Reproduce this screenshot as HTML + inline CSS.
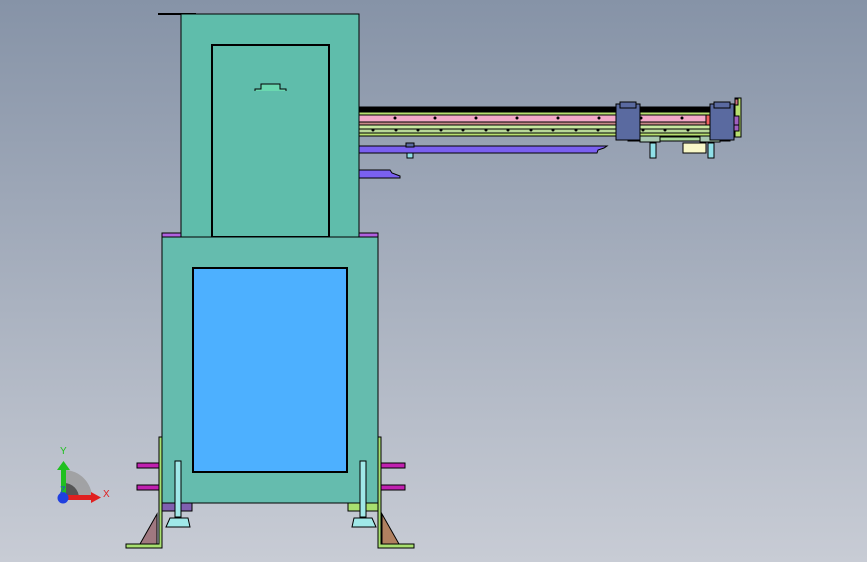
<!DOCTYPE html>
<html><head><style>
html,body{margin:0;padding:0;width:867px;height:562px;overflow:hidden;background:linear-gradient(#8693a7,#c8ccd5);}
svg{display:block}
</style></head><body>
<svg width="867" height="562" viewBox="0 0 867 562" xmlns="http://www.w3.org/2000/svg" font-family="Liberation Sans, sans-serif">
<!-- conveyor -->
<g stroke="#000" stroke-width="1">
<rect x="359" y="107" width="377" height="5" fill="#000"/>
<rect x="359" y="112" width="377" height="3" fill="#b8e070"/>
<rect x="359" y="115" width="370" height="7" fill="#f4a8c8"/>
<rect x="359" y="122" width="370" height="3" fill="#c88888"/>
<rect x="359" y="125" width="377" height="4" fill="#c8e8a0"/>
<rect x="359" y="129" width="377" height="4" fill="#b8d898"/>
<rect x="359" y="133" width="377" height="3" fill="#b8e070"/>
<rect x="706" y="115" width="24" height="10" fill="#f06060"/>
<rect x="714" y="115" width="22" height="6" fill="#b8e070"/>
<rect x="735" y="98" width="6" height="39" fill="#b8e070"/>
<rect x="735" y="99" width="3" height="6" fill="#d07080"/>
<rect x="733" y="116" width="6" height="9" fill="#a060c0"/>
<rect x="733" y="125" width="6" height="6" fill="#a060c0"/>
<rect x="628" y="137" width="102" height="4" fill="#a8d898"/>
<rect x="640" y="136" width="20" height="6" fill="#a8c8b0"/>
<rect x="700" y="136" width="20" height="6" fill="#a8c8b0"/>
<rect x="683" y="143" width="23" height="10" fill="#f8f8c8"/>
<rect x="616" y="104" width="24" height="36" fill="#5a6aa0"/>
<rect x="620" y="102" width="16" height="6" fill="#5a6aa0"/>
<rect x="710" y="104" width="24" height="36" fill="#5a6aa0"/>
<rect x="714" y="102" width="16" height="6" fill="#5a6aa0"/>
<rect x="650" y="143" width="6" height="15" fill="#90e0e8"/>
<rect x="708" y="143" width="6" height="15" fill="#90e0e8"/>
<path d="M359 146 H607 L604 148 L598 150 L597 153 H359 Z" fill="#7a60f0"/>
<path d="M359 170 H390 L392 173 L400 176 V178 H359 Z" fill="#7a60f0"/>
<rect x="406" y="143" width="8" height="4" fill="#5a6aa0"/>
<rect x="407" y="153" width="6" height="5" fill="#90e0e8"/>
</g>
<g fill="#000">
<circle cx="395" cy="118" r="1.5"/><circle cx="435" cy="118" r="1.5"/><circle cx="476" cy="118" r="1.5"/><circle cx="517" cy="118" r="1.5"/><circle cx="558" cy="118" r="1.5"/><circle cx="599" cy="118" r="1.5"/><circle cx="641" cy="118" r="1.5"/><circle cx="682" cy="118" r="1.5"/>
<circle cx="373" cy="130" r="1.5"/><circle cx="396" cy="130" r="1.5"/><circle cx="418" cy="130" r="1.5"/><circle cx="441" cy="130" r="1.5"/><circle cx="463" cy="130" r="1.5"/><circle cx="486" cy="130" r="1.5"/><circle cx="508" cy="130" r="1.5"/><circle cx="531" cy="130" r="1.5"/><circle cx="553" cy="130" r="1.5"/><circle cx="576" cy="130" r="1.5"/><circle cx="598" cy="130" r="1.5"/><circle cx="643" cy="130" r="1.5"/><circle cx="665" cy="130" r="1.5"/><circle cx="688" cy="130" r="1.5"/>
</g>
<!-- purple strips -->
<rect x="162" y="233" width="216" height="5" fill="#b060e0" stroke="#000"/>
<!-- top box -->
<line x1="158" y1="14" x2="196" y2="14" stroke="#000" stroke-width="2"/>
<rect x="181" y="14" width="178" height="223" fill="#5fbdab" stroke="#000"/>
<rect x="212" y="45" width="117" height="192" fill="#5fbdab" stroke="#000" stroke-width="2"/>
<path d="M255 91 V89 H261 V84 H280 V89 H286 V91" fill="#6ad8b0" stroke="#000"/>
<!-- lower box -->
<rect x="162" y="237" width="216" height="266" fill="#65bcae" stroke="#000"/>
<rect x="193" y="268" width="154" height="204" fill="#4db0ff" stroke="#000" stroke-width="2"/>
<!-- side brackets -->
<g stroke="#000">
<rect x="137" y="463" width="22" height="5" fill="#c020b0"/>
<rect x="137" y="485" width="22" height="5" fill="#c020b0"/>
<rect x="381" y="463" width="24" height="5" fill="#c020b0"/>
<rect x="381" y="485" width="24" height="5" fill="#c020b0"/>
<path d="M159 437 H162 V548 H126 V544 H159 Z" fill="#a8e070"/>
<path d="M378 437 H381 V544 H414 V548 H378 Z" fill="#a8e070"/>
<path d="M157 514 V544 H140 Z" fill="#a07880"/>
<path d="M382 514 V544 H399 Z" fill="#b08060"/>
<rect x="162" y="503" width="30" height="8" fill="#8060b0"/>
<rect x="348" y="503" width="30" height="8" fill="#a8e070"/>
<rect x="175" y="461" width="6" height="56" fill="#a0e8e8"/>
<rect x="360" y="461" width="6" height="56" fill="#a0e8e8"/>
<path d="M166 527 L170 518 H188 L190 527 Z" fill="#a0e8e8"/>
<path d="M352 527 L354 518 H372 L376 527 Z" fill="#a0e8e8"/>
</g>
<!-- triad -->
<path d="M64 470 A28 28 0 0 1 92 498 H64 Z" fill="#9a9a9a" opacity="0.8"/>
<path d="M64 483 A15 15 0 0 1 79 498 H64 Z" fill="#555"/>
<rect x="61" y="468" width="5" height="30" fill="#20c020"/>
<path d="M57 470 L63.5 461 L70 470 Z" fill="#20c020"/>
<rect x="64" y="495" width="28" height="5" fill="#e02020"/>
<path d="M91 492 L101 497.5 L91 503 Z" fill="#e02020"/>
<circle cx="63" cy="498" r="5.5" fill="#2040e0"/>
<text x="60" y="454" font-size="10" fill="#20c020">Y</text>
<text x="103" y="497" font-size="10" fill="#e02020">X</text>
<text x="60" y="493" font-size="9" fill="#2040e0">Z</text>
</svg>
</body></html>
